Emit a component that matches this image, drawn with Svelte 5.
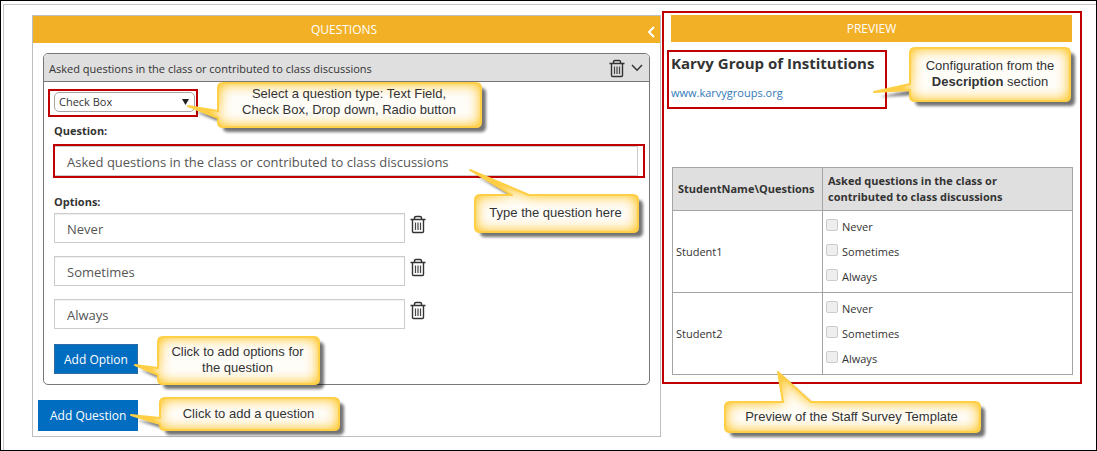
<script>
  const questionText = 'Asked questions in the class or contributed to class discussions';
  const types = ['Text Field', 'Check Box', 'Drop down', 'Radio button'];
  const students = ['Student1', 'Student2'];

  let type = $state('Check Box');
  let question = $state(questionText);
  let options = $state([{ text: 'Never' }, { text: 'Sometimes' }, { text: 'Always' }]);

  // Rounded box outline with a pointer leaving its left or top edge between a and b.
  function outline({ w, h, side, a, b, tip }) {
    const r = 5;
    const point = `L${tip[0]} ${tip[1]}`;
    const top = side === 'top' ? `H${a} ${point} L${b} 0` : '';
    const left = side === 'left' ? `V${b} ${point} L0 ${a}` : '';
    return `M${r} 0 ${top} H${w - r} Q${w} 0 ${w} ${r} V${h - r} Q${w} ${h} ${w - r} ${h} H${r} Q0 ${h} 0 ${h - r} ${left} V${r} Q0 0 ${r} 0Z`;
  }

  const notes = {
    type: { w: 263, h: 44, side: 'left', a: 28, b: 35, tip: [-30, 23] },
    question: { w: 163, h: 37, side: 'top', a: 37, b: 54, tip: [-5, -25] },
    option: { w: 161, h: 47, side: 'left', a: 31, b: 38, tip: [-23, 28] },
    add: { w: 179, h: 32, side: 'left', a: 20, b: 26, tip: [-29, 17] },
    config: { w: 160, h: 53, side: 'left', a: 36, b: 42, tip: [-36, 44] },
    preview: { w: 255, h: 30, side: 'top', a: 58, b: 86, tip: [53, -30] }
  };
</script>

{#snippet trash()}
  <svg class="trash" viewBox="0 0 16 19" width="16" height="19" aria-hidden="true">
    <path d="M0.5 4.5H15.5M4.5 4V2.8Q4.5 1.5 6 1.5H10Q11.5 1.5 11.5 2.8V4" fill="none" stroke="#333" stroke-width="1.5" />
    <path d="M2.5 5V16.5Q2.5 17.5 3.5 17.5H12.5Q13.5 17.5 13.5 16.5V5" fill="none" stroke="#333" stroke-width="1.4" />
    <path d="M5.5 7.5V15M8 7.5V15M10.5 7.5V15" stroke="#444" stroke-width="1.2" />
  </svg>
{/snippet}

{#snippet shape(note)}
  <svg class="shape" width={note.w} height={note.h} aria-hidden="true">
    <path d={outline(note)} fill="#fffdf8" filter="url(#note-glow)" />
    <path d={outline(note)} fill="none" stroke="#ffcf45" stroke-width="2" stroke-linejoin="round" />
  </svg>
{/snippet}

<svg class="defs" width="0" height="0" aria-hidden="true">
  <filter id="note-glow" filterUnits="userSpaceOnUse" x="-50" y="-50" width="360" height="130" color-interpolation-filters="sRGB">
    <feFlood flood-color="#ffcd45" result="gold" />
    <feComposite in="gold" in2="SourceAlpha" operator="out" />
    <feGaussianBlur stdDeviation="7" />
    <feComponentTransfer><feFuncA type="linear" slope="1.5" /></feComponentTransfer>
    <feComposite in2="SourceAlpha" operator="in" result="glow" />
    <feFlood flood-color="#000" result="black" />
    <feComposite in="black" in2="SourceAlpha" operator="in" />
    <feGaussianBlur stdDeviation="1.8" />
    <feOffset dx="5" dy="5" />
    <feComponentTransfer result="shadow"><feFuncA type="linear" slope="0.55" /></feComponentTransfer>
    <feMerge>
      <feMergeNode in="shadow" />
      <feMergeNode in="SourceGraphic" />
      <feMergeNode in="glow" />
    </feMerge>
  </filter>
</svg>

<div class="page">
  <main class="sheet">
    <section class="questions">
      <header class="bar">
        <h2>QUESTIONS</h2>
        <button class="collapse" aria-label="Collapse">
          <svg viewBox="0 0 8 12" width="8" height="12"><path d="M7 1L2 6L7 11" fill="none" stroke="#fff" stroke-width="2" /></svg>
        </button>
      </header>

      <article class="card">
        <div class="card-head">
          <span class="card-title">{question}</span>
          <button class="icon" aria-label="Delete question">{@render trash()}</button>
          <button class="icon" aria-label="Toggle question">
            <svg viewBox="0 0 12 8" width="12" height="8"><path d="M1 1L6 6.2L11 1" fill="none" stroke="#333" stroke-width="1.5" /></svg>
          </button>
        </div>

        <div class="card-body">
          <div class="type marked">
            <select bind:value={type} aria-label="Question type">
              {#each types as t}<option>{t}</option>{/each}
            </select>
            <svg class="arrow" viewBox="0 0 7 6" width="7" height="6" aria-hidden="true"><path d="M0 0H7L3.5 6Z" fill="#222" /></svg>
            <div class="note note-type">
              {@render shape(notes.type)}
              <p>Select a question type: Text Field,<br />Check Box, Drop down, Radio button</p>
            </div>
          </div>

          <label class="caption" for="question">Question:</label>
          <div class="question marked">
            <input id="question" type="text" bind:value={question} />
            <div class="note note-question">
              {@render shape(notes.question)}
              <p>Type the question here</p>
            </div>
          </div>

          <div class="caption options-caption" id="options-caption">Options:</div>
          <div class="options" role="group" aria-labelledby="options-caption">
            {#each options as option, i}
              <div class="option">
                <input type="text" bind:value={option.text} aria-label={`Option ${i + 1}`} />
                <button class="icon" aria-label={`Delete option ${i + 1}`}>{@render trash()}</button>
              </div>
            {/each}
          </div>

          <div class="action">
            <button class="primary">Add Option</button>
            <div class="note note-option">
              {@render shape(notes.option)}
              <p>Click to add options for<br />the question</p>
            </div>
          </div>
        </div>
      </article>

      <div class="action add-question">
        <button class="primary wide">Add Question</button>
        <div class="note note-add">
          {@render shape(notes.add)}
          <p>Click to add a question</p>
        </div>
      </div>
    </section>

    <section class="preview marked">
      <header class="bar"><h2>PREVIEW</h2></header>
      <div class="about marked">
        <h1>Karvy Group of Institutions</h1>
        <a href="#site">www.karvygroups.org</a>
      </div>
      <div class="note note-config">
        {@render shape(notes.config)}
        <p>Configuration from the<br /><b>Description</b> section</p>
      </div>

      <table>
        <thead>
          <tr><th class="name">StudentName\Questions</th><th class="asked">Asked questions in the class or contributed to class discussions</th></tr>
        </thead>
        <tbody>
          {#each students as student}
            <tr>
              <td>{student}</td>
              <td>
                <div class="checks">
                  {#each options as option}
                    <label class="check"><input type="checkbox" disabled /><span>{option.text}</span></label>
                  {/each}
                </div>
              </td>
            </tr>
          {/each}
        </tbody>
      </table>

      <div class="note note-preview">
        {@render shape(notes.preview)}
        <p>Preview of the Staff Survey Template</p>
      </div>
    </section>
  </main>
</div>

<style>
  :global(body) {
    background: #fff;
  }
  .page,
  .page * {
    box-sizing: border-box;
  }
  .page {
    display: flex;
    min-height: 100vh;
    padding: 3px 0 0 2px;
    border: 1px solid #000;
    font-family: 'Open Sans', 'Noto Sans', sans-serif;
    font-size: 11px;
    color: #333;
  }
  .defs {
    position: absolute;
  }
  .sheet {
    flex: 1;
    display: grid;
    grid-template-columns: minmax(0, 629fr) minmax(0, 420fr);
    gap: 1px;
    align-items: start;
    padding: 6px 14px 13px 28px;
    border-top: 1px solid #c4c4c8;
    border-left: 1px solid #c4c4c8;
  }
  h1,
  h2,
  p {
    margin: 0;
  }
  button,
  input,
  select {
    margin: 0;
    font-family: inherit;
    color: inherit;
  }
  .marked {
    position: relative;
    border: 2px solid #c00000;
  }

  .bar {
    display: flex;
    align-items: center;
    height: 27px;
    background: #f2b026;
    color: #fff;
  }
  .bar h2 {
    flex: 1;
    text-align: center;
    font-size: 12px;
    font-weight: 400;
  }
  .collapse {
    display: flex;
    padding: 5px 5px 0 0;
    margin-left: -8px;
    border: 0;
    background: none;
  }
  .icon {
    display: flex;
    padding: 0;
    border: 0;
    background: none;
  }

  .questions {
    margin-top: 4px;
    border: 1px solid #bcbec0;
  }
  .card {
    margin: 10px 10px 0;
    border: 1px solid #777;
    border-radius: 5px;
  }
  .card-head {
    display: flex;
    align-items: center;
    gap: 6px;
    height: 28px;
    padding: 1px 6px 0 5px;
    border-bottom: 1px solid #777;
    border-radius: 4px 4px 0 0;
    background: #dfdfdf;
  }
  .card-title {
    flex: 1;
  }
  .card-body {
    padding: 7px 4px 10px;
  }
  .type {
    width: 150px;
    height: 28px;
    padding: 1px 1px 1px 4px;
  }
  select {
    display: block;
    width: 141px;
    height: 20px;
    padding: 0 4px;
    border: 1px solid #a6a6a6;
    border-radius: 5px;
    appearance: none;
    background: #fff;
    font-size: 11px;
    line-height: 18px;
  }
  .arrow {
    position: absolute;
    top: 8px;
    right: 7px;
    pointer-events: none;
  }
  .caption {
    display: block;
    margin: 6px 6px 5px;
    font-weight: 700;
    line-height: 16px;
  }
  .question {
    height: 34px;
    margin: 0 0 0 5px;
    padding-right: 5px;
  }
  .question input {
    display: block;
    width: 100%;
    height: 30px;
    padding: 1px 12px 0;
    border: 1px solid #ccc;
    border-left: 0;
    font-size: 13px;
    color: #555;
  }
  .options-caption {
    margin-top: 16px;
    margin-bottom: 3px;
  }
  .options {
    display: grid;
    gap: 13px;
    padding-left: 6px;
  }
  .option {
    display: flex;
    align-items: flex-start;
    gap: 5px;
  }
  .option input {
    width: 351px;
    height: 30px;
    padding: 1px 12px 0;
    border: 1px solid #ccc;
    box-shadow: inset 0 1px 1px #0001;
    font-size: 13px;
    color: #555;
  }
  .option .icon {
    padding-top: 2px;
  }
  .action {
    position: relative;
    display: flex;
    padding-left: 6px;
    margin-top: 15px;
  }
  .add-question {
    margin: 15px 0 5px;
    padding-left: 5px;
  }
  .primary {
    height: 30px;
    padding: 0 9px;
    border: 1px solid #2e6da4;
    background: #006dc0;
    color: #fff;
    font-size: 12px;
  }
  .wide {
    height: 31px;
    padding: 0 11px;
    border-color: #006dc0;
  }

  .preview {
    padding: 2px 8px 7px 7px;
  }
  .about {
    width: 220px;
    height: 59px;
    margin: 8px 0 0 -4px;
    padding: 0 2px;
  }
  h1 {
    font-size: 15px;
    line-height: 22px;
    font-weight: 700;
    white-space: nowrap;
  }
  a {
    display: block;
    margin-top: 11px;
    line-height: 16px;
    color: #337ab7;
    text-decoration: none;
  }
  table {
    width: 100%;
    margin: 58px 0 0 1px;
    border-collapse: collapse;
    table-layout: fixed;
    line-height: 16px;
  }
  th,
  td {
    border: 1px solid #a5a5a5;
    padding: 0 3px;
    text-align: left;
  }
  th {
    height: 43px;
    padding: 0 5px;
    background: #dfdfdf;
    font-weight: 700;
  }
  th.name {
    width: 150px;
    padding-right: 0;
  }
  th.asked {
    padding-right: 40px;
  }
  td {
    height: 82px;
  }
  .checks {
    display: grid;
    gap: 9px;
  }
  .check {
    display: flex;
    gap: 4px;
  }
  input[type='checkbox'] {
    appearance: none;
    width: 12px;
    height: 12px;
    border: 1px solid #ccc;
    border-radius: 2px;
    background: #eee;
  }

  .note {
    position: absolute;
    z-index: 2;
    display: flex;
    align-items: center;
    justify-content: center;
    font-family: 'Liberation Sans', Arial, sans-serif;
    font-size: 13px;
    line-height: 16px;
    text-align: center;
    white-space: nowrap;
    color: #333;
  }
  .note p {
    position: relative;
  }
  .shape {
    position: absolute;
    inset: 0;
    overflow: visible;
  }
  .note-type {
    top: -8px;
    left: 168px;
    width: 262px;
    height: 45px;
    padding-bottom: 8px;
  }
  .note-question {
    top: 49px;
    left: 420px;
    width: 161px;
    height: 38px;
    padding-bottom: 2px;
  }
  .note-option {
    top: -7px;
    left: 110px;
    width: 159px;
    height: 48px;
    padding-bottom: 2px;
  }
  .note-add {
    top: -2px;
    left: 127px;
    width: 177px;
    height: 33px;
    padding-bottom: 2px;
  }
  .note-config {
    top: 35px;
    right: 10px;
    width: 160px;
    height: 54px;
    padding-bottom: 2px;
  }
  .note-preview {
    top: 389px;
    left: 61px;
    width: 253px;
    height: 31px;
    padding-bottom: 2px;
  }
</style>
